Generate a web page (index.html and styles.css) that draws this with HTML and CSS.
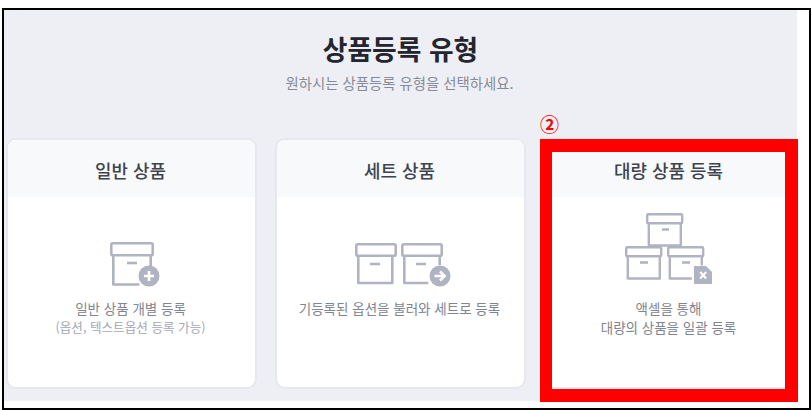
FILE: index.html
```html
<!DOCTYPE html>
<html lang="ko">
<head>
<meta charset="utf-8">
<title>상품등록 유형</title>
<link rel="stylesheet" href="styles.css">
</head>
<body>
<div class="frame">
  <main class="panel">
    <h1 class="title">상품등록 유형</h1>
    <p class="subtitle">원하시는 상품등록 유형을 선택하세요.</p>
    <div class="cards">
      <section class="card">
        <h2 class="card-head">일반 상품</h2>
        <div class="card-body">
          <svg class="icon icon-single" width="50" height="46" viewBox="0 0 50 46" fill="none">
            <g stroke="#b0b4c2" stroke-width="2.6" stroke-linejoin="round">
              <rect x="1.3" y="1.3" width="41.4" height="12" rx="1.5"/>
              <path d="M3.3 13.5v29h26M40.7 13.5v11"/>
              <path d="M17 21h10"/>
            </g>
            <circle cx="39" cy="34" r="10.5" fill="#b0b4c2"/>
            <path d="M39 29v10M34 34h10" stroke="#fff" stroke-width="2.6"/>
          </svg>
          <p class="desc">일반 상품 개별 등록</p>
          <p class="desc note">(옵션, 텍스트옵션 등록 가능)</p>
        </div>
      </section>
      <section class="card">
        <h2 class="card-head">세트 상품</h2>
        <div class="card-body">
          <svg class="icon icon-set" width="97" height="46" viewBox="0 -1 97 46" fill="none">
            <g stroke="#b0b4c2" stroke-width="2.6" stroke-linejoin="round">
              <rect x="1.3" y="1.3" width="39.4" height="11.4" rx="1.5"/>
              <path d="M3.3 13v27h34V13M15 21h10"/>
              <rect x="47.3" y="1.3" width="39.4" height="11.4" rx="1.5"/>
              <path d="M49.3 13v27h24M84.7 13v9M61 21h10"/>
            </g>
            <circle cx="85" cy="33" r="10.5" fill="#b0b4c2"/>
            <path d="M79.5 33h10M85 28.5l4.6 4.5-4.6 4.5" stroke="#fff" stroke-width="2.6"/>
          </svg>
          <p class="desc">기등록된 옵션을 불러와 세트로 등록</p>
        </div>
      </section>
      <section class="card">
        <h2 class="card-head">대량 상품 등록</h2>
        <div class="card-body bulk">
          <svg class="icon icon-bulk" width="88" height="72" viewBox="0 0 88 72" fill="none">
            <g stroke="#b0b4c2" stroke-width="2.4" stroke-linejoin="round">
              <rect x="22.2" y="2.2" width="35" height="9" rx="1"/>
              <path d="M23.8 11.5v22h32v-22M37 17.5h7"/>
              <rect x="1.2" y="35.2" width="35" height="9" rx="1"/>
              <path d="M2.8 44.5v22h32v-22M15 50.5h8"/>
              <rect x="43.2" y="35.2" width="35" height="9" rx="1"/>
              <path d="M44.8 44.5v22h22M76.8 44.5v9M57 50.5h8"/>
            </g>
            <path d="M69 54h12l6 6v12H69z" fill="#b0b4c2"/>
            <path d="M75.2 60l6 6.5M81.2 60l-6 6.5" stroke="#fff" stroke-width="2.2"/>
          </svg>
          <p class="desc">액셀을 통해</p>
          <p class="desc">대량의 상품을 일괄 등록</p>
        </div>
      </section>
    </div>
    <div class="highlight"><span class="marker">②</span></div>
  </main>
</div>
</body>
</html>
```

FILE: styles.css
```css
* { box-sizing: border-box; margin: 0; padding: 0; }

html, body { width: 812px; height: 410px; overflow: hidden; background: #fff; }

body {
  padding: 8px 1px 0 2px;
  font-family: "Noto Sans CJK KR", "Noto Sans", sans-serif;
}

.frame {
  width: 809px;
  height: 402px;
  border: 2px solid #000;
  background: #fff;
}

.panel {
  position: relative;
  width: 793px;
  height: 391px;
  padding: 0 2px;
  background: #eeeff4;
  text-align: center;
}

.title {
  padding-top: 20px;
  font-size: 26.8px;
  line-height: 38px;
  font-weight: 700;
  color: #23262e;
}

.subtitle {
  margin-top: 5px;
  padding-right: 2px;
  font-size: 14.4px;
  line-height: 20px;
  color: #868b98;
}

.cards {
  display: flex;
  gap: 18px;
  margin-top: 45px;
}

.card {
  width: 251px;
  height: 251px;
  border: 2px solid #e6e8ef;
  border-radius: 10px;
  background: #fff;
  overflow: hidden;
}

.card-head {
  height: 57px;
  padding-right: 2px;
  background: #f8f9fb;
  font-size: 17.9px;
  line-height: 60px;
  font-weight: 500;
  color: #3f434d;
}

.card-body { padding: 45px 2px 0 0; }
.card-body.bulk { padding-top: 15px; }

.icon { display: block; margin-bottom: 11px; }
.icon-single { margin-left: 102px; }
.icon-set { margin-left: 78px; }
.icon-bulk { margin-left: 79px; margin-bottom: 15px; }

.desc {
  font-size: 13.5px;
  line-height: 19px;
  color: #80858f;
}

.note { margin-top: -1px; font-size: 12.6px; color: #a4a8b4; }

.highlight {
  position: absolute;
  left: 536px;
  top: 129px;
  width: 258px;
  height: 263px;
  border: solid #f00;
  border-width: 13px 13px 13px 12px;
}

.marker {
  position: absolute;
  left: -12px;
  top: -42px;
  font-size: 19px;
  line-height: 28px;
  font-weight: 700;
  color: #f00;
}
```
